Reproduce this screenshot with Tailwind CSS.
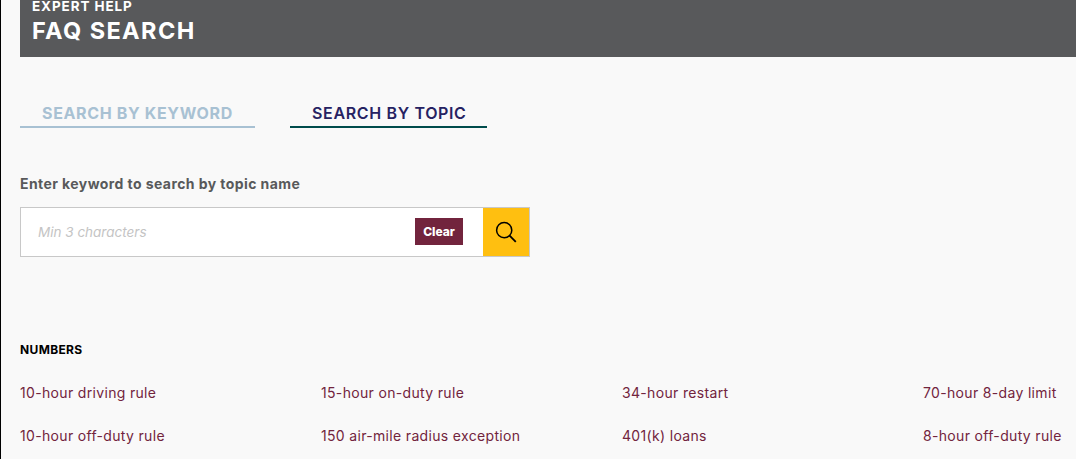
<!DOCTYPE html>
<html lang="en">
<head>
  <meta charset="UTF-8">
  <meta name="viewport" content="width=device-width, initial-scale=1.0">
  <title>FAQ Search</title>
  <script src="https://cdn.jsdelivr.net/npm/@tailwindcss/browser@4"></script>
</head>
<body class="h-screen overflow-hidden border-l border-black bg-[#f9f9f9] pl-[19px] font-['Inter','Liberation_Sans',sans-serif]">
  <!-- Page banner -->
  <header class="flex h-[57px] flex-col bg-[#58595b] pl-3 font-bold text-white">
    <p class="-mt-0.5 text-[13.5px] leading-4 tracking-[0.9px]">EXPERT HELP</p>
    <h1 class="mt-[3px] text-[23.5px] leading-7 tracking-[1.4px]">FAQ SEARCH</h1>
  </header>

  <!-- Tabs -->
  <nav class="mt-[43px] flex h-7 gap-[35px] text-[16px] leading-[26px] tracking-[0.65px]">
    <button class="w-[235px] border-b-2 border-[#a8c1d3] pl-[22px] text-left font-bold whitespace-nowrap text-[#a8c1d3]">SEARCH BY KEYWORD</button>
    <button class="w-[197px] border-b-2 border-[#004c4c] pl-[22px] text-left font-semibold whitespace-nowrap text-[#262262]">SEARCH BY TOPIC</button>
  </nav>

  <!-- Topic search -->
  <form class="mt-[46px]">
    <label for="topic" class="block h-5 text-[14px] leading-5 font-bold tracking-[0.42px] whitespace-nowrap text-[#58595b]">Enter keyword to search by topic name</label>
    <div class="mt-[13px] flex h-[50px] w-[510px] items-center border border-[#c8c8c8] bg-white">
      <input id="topic" type="text" placeholder="Min 3 characters" class="min-w-0 flex-1 pl-[17px] text-[13.5px] italic outline-none placeholder:text-[#c4c4c4]">
      <button type="button" class="mr-5 mb-px h-[27px] w-12 bg-[#72243d] text-[12px] font-extrabold text-white">Clear</button>
      <button type="button" aria-label="Search" class="flex h-full w-[46px] items-center justify-center bg-[#ffbf10]">
        <svg class="size-[22px]" viewBox="0 0 22 22" fill="none" stroke="#000" stroke-width="1.5">
          <circle cx="9.2" cy="9.2" r="7.6" />
          <path d="M14.6 14.6 20.8 20.8" stroke-width="1.8" />
        </svg>
      </button>
    </div>
  </form>

  <!-- Topics -->
  <section class="mt-[85px]">
    <h2 class="h-4 text-[12px] leading-4 font-bold tracking-[0.35px] text-black">NUMBERS</h2>
    <ul class="mt-[21px] grid grid-cols-[301px_301px_301px_auto] gap-y-[15px] text-[14px] leading-7 tracking-[0.33px] whitespace-nowrap text-[#72243d]">
      <li><a href="#">10-hour driving rule</a></li>
      <li><a href="#">15-hour on-duty rule</a></li>
      <li><a href="#">34-hour restart</a></li>
      <li><a href="#">70-hour 8-day limit</a></li>
      <li><a href="#">10-hour off-duty rule</a></li>
      <li><a href="#">150 air-mile radius exception</a></li>
      <li><a href="#">401(k) loans</a></li>
      <li><a href="#">8-hour off-duty rule</a></li>
    </ul>
  </section>
</body>
</html>
